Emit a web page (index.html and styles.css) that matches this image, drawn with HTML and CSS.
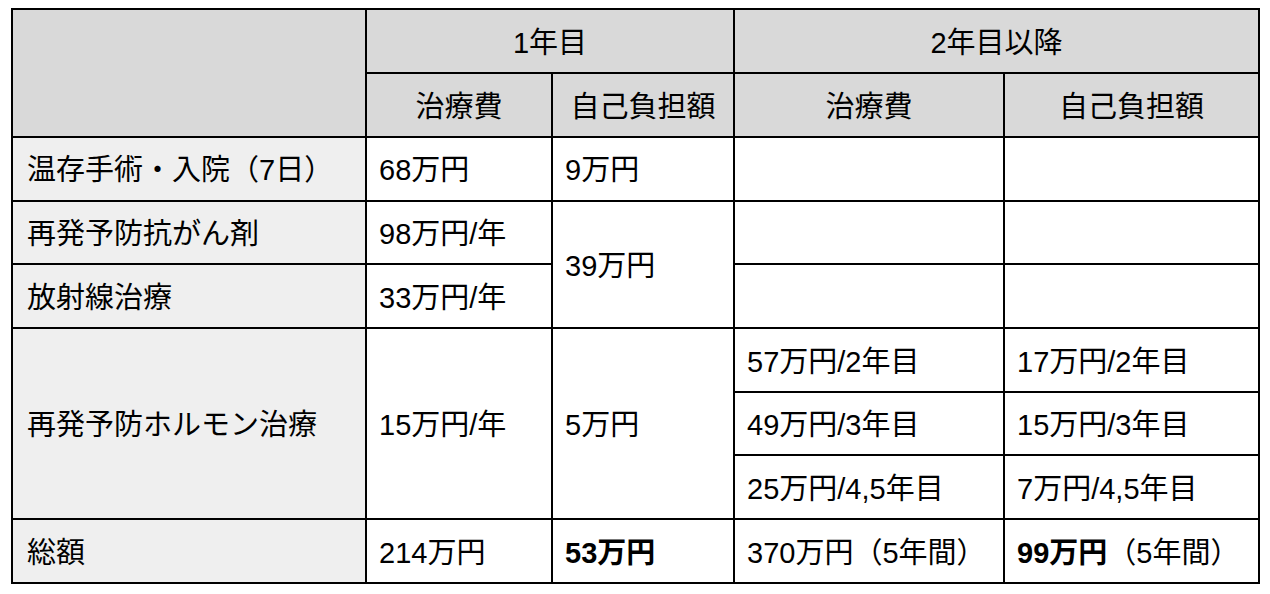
FILE: index.html
```html
<!DOCTYPE html>
<html lang="ja">
<head>
<meta charset="utf-8">
<title>治療費と自己負担額</title>
<link rel="stylesheet" href="styles.css">
</head>
<body>
<table class="cost">
  <colgroup>
    <col class="c1">
    <col class="c2">
    <col class="c3">
    <col class="c4">
    <col class="c5">
  </colgroup>
  <thead>
    <tr class="hrow">
      <th class="corner" rowspan="2"></th>
      <th colspan="2">1年目</th>
      <th colspan="2">2年目以降</th>
    </tr>
    <tr class="hrow">
      <th>治療費</th>
      <th>自己負担額</th>
      <th>治療費</th>
      <th>自己負担額</th>
    </tr>
  </thead>
  <tbody>
    <tr>
      <th class="label">温存手術・入院（7日）</th>
      <td>68万円</td>
      <td>9万円</td>
      <td></td>
      <td></td>
    </tr>
    <tr>
      <th class="label">再発予防抗がん剤</th>
      <td>98万円/年</td>
      <td rowspan="2">39万円</td>
      <td></td>
      <td></td>
    </tr>
    <tr>
      <th class="label">放射線治療</th>
      <td>33万円/年</td>
      <td></td>
      <td></td>
    </tr>
    <tr>
      <th class="label" rowspan="3">再発予防ホルモン治療</th>
      <td rowspan="3">15万円/年</td>
      <td rowspan="3">5万円</td>
      <td>57万円/2年目</td>
      <td>17万円/2年目</td>
    </tr>
    <tr>
      <td>49万円/3年目</td>
      <td>15万円/3年目</td>
    </tr>
    <tr>
      <td>25万円/4,5年目</td>
      <td>7万円/4,5年目</td>
    </tr>
    <tr>
      <th class="label">総額</th>
      <td>214万円</td>
      <td><strong>53万円</strong></td>
      <td>370万円（5年間）</td>
      <td><strong>99万円</strong>（5年間）</td>
    </tr>
  </tbody>
</table>
</body>
</html>
```
FILE: styles.css
```css
html, body {
  margin: 0;
  padding: 0;
  background: #ffffff;
}

body {
  padding: 8px 0 0 11px;
  font-family: "Liberation Sans", "Noto Sans CJK JP", sans-serif;
  color: #000000;
}

.cost {
  border-collapse: collapse;
  table-layout: fixed;
  width: 1247px;
  font-size: 29px;
}

.c1 { width: 354px; }
.c2 { width: 186px; }
.c3 { width: 182px; }
.c4 { width: 270px; }
.c5 { width: 255px; }

.cost th,
.cost td {
  border: 2px solid #000000;
  padding: 4px 12px 0;
  vertical-align: middle;
  text-align: left;
  font-weight: normal;
  white-space: nowrap;
  line-height: 1.2;
}

.cost thead th {
  background: #d9d9d9;
  text-align: center;
}

.cost tr {
  height: 64px;
}

.cost tbody tr {
  height: 63.7px;
}

.cost th.label {
  background: #efefef;
  padding-left: 14px;
}

.cost strong {
  font-weight: bold;
}
```
